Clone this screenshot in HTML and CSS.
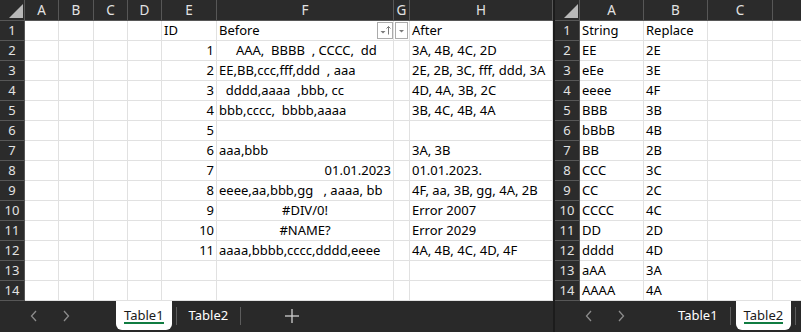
FILE: index.html
```html
<!DOCTYPE html>
<html lang="en">
<head>
    <meta charset="UTF-8">
    <meta name="viewport" content="width=device-width, initial-scale=1.0">
    <title>Replace strings</title>
    <link rel="stylesheet" href="styles.css">
</head>
<body>

    <!-- Left window: Table1 -->
    <div class="window window-left">
        <table class="sheet sheet-left">
            <colgroup>
                <col style="width:25px"><col style="width:34px"><col style="width:35px"><col style="width:34px"><col style="width:34px">
                <col style="width:55px"><col style="width:177px"><col style="width:16px"><col style="width:143px">
            </colgroup>
            <thead>
                <tr>
                    <th class="corner"><svg width="14" height="14" viewBox="0 0 14 14"><polygon points="14,0 14,14 0,14" fill="#b8b8b8"/></svg></th>
                    <th>A</th><th>B</th><th>C</th><th>D</th><th>E</th><th>F</th><th>G</th><th>H</th>
                </tr>
            </thead>
            <tbody>
                <tr><th>1</th><td></td><td></td><td></td><td></td><td>ID</td>
                    <td class="has-button">Before<span class="filter-btn filter-sort"><svg width="14" height="15" viewBox="0 0 14 15"><polygon points="2.5,8 7.5,8 5,10.5" fill="#7a7a7a"/><line x1="10.5" y1="3.5" x2="10.5" y2="11.5" stroke="#7a7a7a" stroke-width="1"/><polyline points="8.5,5.5 10.5,3.5 12.5,5.5" fill="none" stroke="#7a7a7a" stroke-width="1"/></svg></span></td>
                    <td class="has-button"><span class="filter-btn filter-drop"><svg width="11" height="15" viewBox="0 0 11 15"><polygon points="3,7 8,7 5.5,9.5" fill="#7a7a7a"/></svg></span></td>
                    <td>After</td></tr>
                <tr><th>2</th><td></td><td></td><td></td><td></td><td class="num">1</td><td>     AAA,  BBBB  , CCCC,  dd</td><td></td><td>3A, 4B, 4C, 2D</td></tr>
                <tr><th>3</th><td></td><td></td><td></td><td></td><td class="num">2</td><td>EE,BB,ccc,fff,ddd  , aaa</td><td></td><td>2E, 2B, 3C, fff, ddd, 3A</td></tr>
                <tr><th>4</th><td></td><td></td><td></td><td></td><td class="num">3</td><td>  dddd,aaaa  ,bbb, cc</td><td></td><td>4D, 4A, 3B, 2C</td></tr>
                <tr><th>5</th><td></td><td></td><td></td><td></td><td class="num">4</td><td>bbb,cccc,  bbbb,aaaa</td><td></td><td>3B, 4C, 4B, 4A</td></tr>
                <tr><th>6</th><td></td><td></td><td></td><td></td><td class="num">5</td><td></td><td></td><td></td></tr>
                <tr><th>7</th><td></td><td></td><td></td><td></td><td class="num">6</td><td>aaa,bbb</td><td></td><td>3A, 3B</td></tr>
                <tr><th>8</th><td></td><td></td><td></td><td></td><td class="num">7</td><td class="num">01.01.2023</td><td></td><td>01.01.2023.</td></tr>
                <tr><th>9</th><td></td><td></td><td></td><td></td><td class="num">8</td><td>eeee,aa,bbb,gg   , aaaa, bb</td><td></td><td>4F, aa, 3B, gg, 4A, 2B</td></tr>
                <tr><th>10</th><td></td><td></td><td></td><td></td><td class="num">9</td><td class="err">#DIV/0!</td><td></td><td>Error 2007</td></tr>
                <tr><th>11</th><td></td><td></td><td></td><td></td><td class="num">10</td><td class="err">#NAME?</td><td></td><td>Error 2029</td></tr>
                <tr><th>12</th><td></td><td></td><td></td><td></td><td class="num">11</td><td>aaaa,bbbb,cccc,dddd,eeee</td><td></td><td>4A, 4B, 4C, 4D, 4F</td></tr>
                <tr><th>13</th><td></td><td></td><td></td><td></td><td></td><td></td><td></td><td></td></tr>
                <tr><th>14</th><td></td><td></td><td></td><td></td><td></td><td></td><td></td><td></td></tr>
            </tbody>
        </table>

        <div class="tabbar">
            <div class="tab-nav">
                <span class="nav-arrow"><svg width="8" height="12" viewBox="0 0 8 12"><polyline points="6,1 1.5,6 6,11" fill="none" stroke="#8c8c8c" stroke-width="1.3"/></svg></span>
                <span class="nav-arrow"><svg width="8" height="12" viewBox="0 0 8 12"><polyline points="2,1 6.5,6 2,11" fill="none" stroke="#8c8c8c" stroke-width="1.3"/></svg></span>
            </div>
            <div class="tab active">Table1</div>
            <span class="tab-sep"></span>
            <div class="tab">Table2</div>
            <span class="tab-sep"></span>
            <div class="tab-add"><svg width="16" height="16" viewBox="0 0 16 16"><line x1="8" y1="1" x2="8" y2="15" stroke="#d0d0d0" stroke-width="1.3"/><line x1="1" y1="8" x2="15" y2="8" stroke="#d0d0d0" stroke-width="1.3"/></svg></div>
        </div>
    </div>

    <!-- Right window: Table2 -->
    <div class="window window-right">
        <table class="sheet sheet-right">
            <colgroup>
                <col style="width:25px"><col style="width:64px"><col style="width:64px"><col style="width:65px"><col style="width:40px">
            </colgroup>
            <thead>
                <tr>
                    <th class="corner"><svg width="14" height="14" viewBox="0 0 14 14"><polygon points="14,0 14,14 0,14" fill="#b8b8b8"/></svg></th>
                    <th>A</th><th>B</th><th>C</th><th></th>
                </tr>
            </thead>
            <tbody>
                <tr><th>1</th><td>String</td><td>Replace</td><td></td><td></td></tr>
                <tr><th>2</th><td>EE</td><td>2E</td><td></td><td></td></tr>
                <tr><th>3</th><td>eEe</td><td>3E</td><td></td><td></td></tr>
                <tr><th>4</th><td>eeee</td><td>4F</td><td></td><td></td></tr>
                <tr><th>5</th><td>BBB</td><td>3B</td><td></td><td></td></tr>
                <tr><th>6</th><td>bBbB</td><td>4B</td><td></td><td></td></tr>
                <tr><th>7</th><td>BB</td><td>2B</td><td></td><td></td></tr>
                <tr><th>8</th><td>CCC</td><td>3C</td><td></td><td></td></tr>
                <tr><th>9</th><td>CC</td><td>2C</td><td></td><td></td></tr>
                <tr><th>10</th><td>CCCC</td><td>4C</td><td></td><td></td></tr>
                <tr><th>11</th><td>DD</td><td>2D</td><td></td><td></td></tr>
                <tr><th>12</th><td>dddd</td><td>4D</td><td></td><td></td></tr>
                <tr><th>13</th><td>aAA</td><td>3A</td><td></td><td></td></tr>
                <tr><th>14</th><td>AAAA</td><td>4A</td><td></td><td></td></tr>
            </tbody>
        </table>

        <div class="tabbar">
            <div class="tab-nav">
                <span class="nav-arrow"><svg width="8" height="12" viewBox="0 0 8 12"><polyline points="6,1 1.5,6 6,11" fill="none" stroke="#8c8c8c" stroke-width="1.3"/></svg></span>
                <span class="nav-arrow"><svg width="8" height="12" viewBox="0 0 8 12"><polyline points="2,1 6.5,6 2,11" fill="none" stroke="#8c8c8c" stroke-width="1.3"/></svg></span>
            </div>
            <div class="tab">Table1</div>
            <span class="tab-sep"></span>
            <div class="tab active">Table2</div>
            <span class="tab-sep"></span>
        </div>
    </div>

</body>
</html>
```

FILE: styles.css
```css
/* Global reset */
* {
    margin: 0;
    padding: 0;
    box-sizing: border-box;
}

body {
    width: 801px;
    height: 332px;
    display: flex;
    overflow: hidden;
    background: #292929;
    font-family: 'Noto Sans', sans-serif;
}

/* Windows */
.window {
    height: 332px;
    display: flex;
    flex-direction: column;
    overflow: hidden;
    background: #292929;
}

.window-left {
    width: 555px;
    flex: none;
    border-right: 2px solid #1c1c1c;
}

.window-right {
    flex: 1;
}

/* Sheet grid */
.sheet {
    table-layout: fixed;
    border-collapse: separate;
    border-spacing: 0;
    flex: none;
}

.sheet-left {
    width: 553px;
}

.sheet-right {
    width: 258px;
}

.sheet th,
.sheet td {
    height: 20px;
    padding: 0 2px;
    white-space: pre;
    overflow: visible;
    font-size: 13px;
    line-height: 19px;
    font-weight: normal;
}

.sheet td {
    background: #ffffff;
    color: #000000;
    text-align: left;
    border-right: 1px solid #e1e1e1;
    border-bottom: 1px solid #e1e1e1;
}

.sheet th {
    background: #2b2b2b;
    color: #e2e2e2;
    text-align: center;
    border-right: 1px solid #575757;
    border-bottom: 1px solid #575757;
}

.sheet thead th {
    height: 21px;
    line-height: 20px;
    font-size: 13.5px;
}

.sheet th.corner {
    padding: 0;
    text-align: right;
    vertical-align: bottom;
    line-height: 0;
}

.sheet th.corner svg {
    margin: 0 1px 2px 0;
}

.sheet td.num {
    text-align: right;
}

.sheet td.err {
    text-align: center;
}

/* Filter buttons on header cells */
.sheet td.has-button {
    position: relative;
}

.filter-btn {
    position: absolute;
    top: 1px;
    height: 17px;
    background: #ffffff;
    border: 1px solid #ababab;
    display: flex;
    align-items: center;
    justify-content: center;
    line-height: 0;
}

.filter-sort {
    right: 0;
    width: 16px;
}

.filter-drop {
    right: 1px;
    width: 13px;
}

/* Sheet tabs */
.tabbar {
    flex: 1;
    display: flex;
    align-items: stretch;
    background: #292929;
    padding-bottom: 2px;
    color: #ffffff;
    font-size: 13px;
}

.tab-nav {
    width: 115px;
    flex: none;
    display: flex;
    align-items: center;
    gap: 20px;
    padding-left: 28px;
}

.nav-arrow {
    width: 12px;
    display: flex;
    justify-content: center;
    line-height: 0;
}

.tab {
    display: flex;
    align-items: center;
    padding: 0 8px 2px;
    position: relative;
    flex: none;
}

.tab.active {
    background: #ffffff;
    color: #1a1a1a;
    border-radius: 0 0 6px 6px;
    margin-left: 1px;
}

.tab.active::after {
    content: "";
    position: absolute;
    left: 8px;
    right: 8px;
    bottom: 6px;
    height: 2px;
    background: #107c41;
}

.tab-sep {
    width: 1px;
    height: 18px;
    flex: none;
    align-self: center;
    background: #5c5c5c;
    margin: 0 4px;
}

.tab-add {
    display: flex;
    align-items: center;
    margin-left: 39px;
    line-height: 0;
}
```
